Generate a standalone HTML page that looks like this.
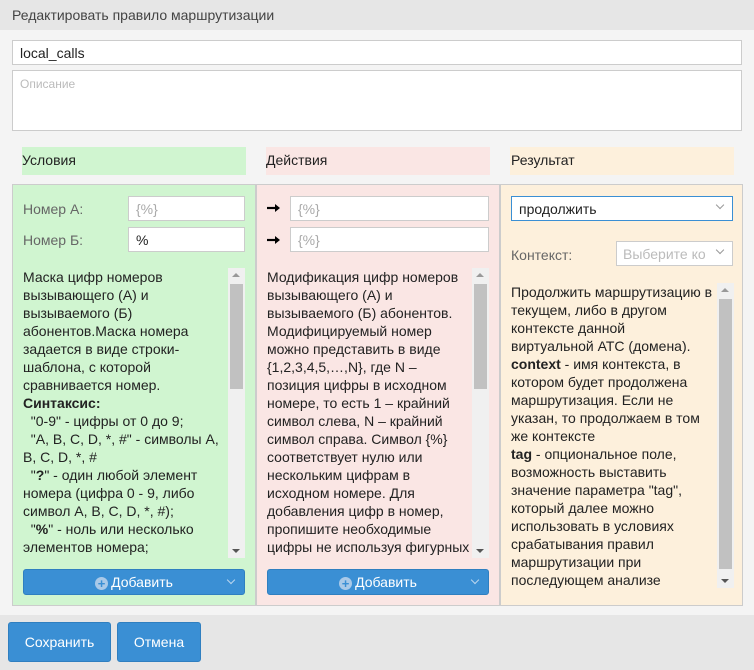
<!DOCTYPE html>
<html><head><meta charset="utf-8"><style>
*{box-sizing:border-box;margin:0;padding:0}
body{width:754px;height:670px;background:#f4f4f4;font-family:"Liberation Sans",Arial,sans-serif;font-size:14px;color:#222;position:relative;overflow:hidden}
.a{position:absolute}
.hdr{left:0;top:0;width:754px;height:30px;background:#e6e6e6;color:#444;padding:7px 12px;font-size:14px}
.inp{background:#fff;border:1px solid #ccc}
.ph{color:#aaa}
.ch{height:28px;padding:5px 0 0 0;font-size:14px;color:#222}
.lbl{color:#666}
.txt{line-height:18px;font-size:14px;color:#222;overflow:hidden}
.sb{background:#f0f0f0;width:17px}
.sb .th{position:absolute;left:2px;top:16px;width:13px;height:105px;background:#c1c1c1}
.sb .up,.sb .dn{position:absolute;left:4px;width:0;height:0;border-left:4px solid transparent;border-right:4px solid transparent}
.sb .up{top:5px;border-bottom:4px solid #999}
.sb .dn{bottom:5px;border-top:4px solid #555}
.btn{background:#3a8fd4;border:1px solid #2f7fc0;border-radius:3px;color:#fff;text-align:center}
.chev{position:absolute;width:6px;height:6px;border-right:1px solid #999;border-bottom:1px solid #999;transform:rotate(45deg)}
.ic{display:inline-block;width:13px;height:13px;border-radius:7px;background:#a9c9e8;color:#3a8fd4;font-size:13px;line-height:13px;font-weight:bold;vertical-align:-1px;margin-right:3px}
</style></head><body>
<div class="a hdr">Редактировать правило маршрутизации</div>
<div class="a inp" style="left:12px;top:40px;width:730px;height:25px;padding:4px 7px;font-size:14px">local_calls</div>
<div class="a inp ph" style="left:12px;top:70px;width:730px;height:61px;padding:6px 7px;font-size:12px;color:#bbb">Описание</div>

<div class="a ch" style="left:22px;top:147px;width:224px;background:#d0f5d0">Условия</div>
<div class="a ch" style="left:266px;top:147px;width:224px;background:#fae6e4">Действия</div>
<div class="a ch" style="left:510px;top:147px;width:224px;background:#fdf0dc;padding-left:1px">Результат</div>

<div class="a" style="left:12px;top:184px;width:731px;height:422px;border:1px solid #ccc;background:#ccc"></div>
<div class="a" style="left:13px;top:185px;width:242px;height:420px;background:#d0f5d0"></div>
<div class="a" style="left:257px;top:185px;width:242px;height:420px;background:#fae6e4"></div>
<div class="a" style="left:501px;top:185px;width:241px;height:420px;background:#fdf0dc"></div>

<!-- col1 -->
<div class="a lbl" style="left:23px;top:201px">Номер А:</div>
<div class="a inp ph" style="left:128px;top:196px;width:117px;height:25px;padding:4px 7px">{%}</div>
<div class="a lbl" style="left:23px;top:232px">Номер Б:</div>
<div class="a inp" style="left:128px;top:227px;width:117px;height:25px;padding:4px 7px">%</div>
<div class="a txt" style="left:23px;top:268px;width:205px;height:290px">Маска цифр номеров вызывающего (А) и вызываемого (Б) абонентов.Маска номера задается в виде строки-шаблона, с которой сравнивается номер.<br><b>Синтаксис:</b><br>&nbsp;&nbsp;"0-9" - цифры от 0 до 9;<br>&nbsp;&nbsp;"A, B, C, D, *, #" - символы A, B, C, D, *, #<br>&nbsp;&nbsp;"<b>?</b>" - один любой элемент номера (цифра 0 - 9, либо символ A, B, C, D, *, #);<br>&nbsp;&nbsp;"<b>%</b>" - ноль или несколько элементов номера;</div>
<div class="a sb" style="left:228px;top:268px;height:290px"><div class="up"></div><div class="th"></div><div class="dn"></div></div>
<div class="a btn" style="left:23px;top:569px;width:222px;height:26px;padding-top:4px"><span class="ic">+</span>Добавить<div class="chev" style="right:10px;top:7px;border-color:#bcd6ee"></div></div>

<!-- col2 -->
<svg class="a" style="left:267px;top:204px" width="14" height="8"><path d="M0 4H9" stroke="#000" stroke-width="2.2"/><path d="M8 0L13 4L8 8Z" fill="#000"/></svg>
<div class="a inp ph" style="left:290px;top:196px;width:199px;height:25px;padding:4px 7px">{%}</div>
<svg class="a" style="left:267px;top:236px" width="14" height="8"><path d="M0 4H9" stroke="#000" stroke-width="2.2"/><path d="M8 0L13 4L8 8Z" fill="#000"/></svg>
<div class="a inp ph" style="left:290px;top:227px;width:199px;height:25px;padding:4px 7px">{%}</div>
<div class="a txt" style="left:267px;top:268px;width:206px;height:290px">Модификация цифр номеров вызывающего (А) и вызываемого (Б) абонентов. Модифицируемый номер можно представить в виде {1,2,3,4,5,…,N}, где N – позиция цифры в исходном номере, то есть 1 – крайний символ слева, N – крайний символ справа. Символ {%} соответствует нулю или нескольким цифрам в исходном номере. Для добавления цифр в номер, пропишите необходимые цифры не используя фигурных</div>
<div class="a sb" style="left:472px;top:268px;height:290px"><div class="up"></div><div class="th"></div><div class="dn"></div></div>
<div class="a btn" style="left:267px;top:569px;width:222px;height:26px;padding-top:4px"><span class="ic">+</span>Добавить<div class="chev" style="right:10px;top:7px;border-color:#bcd6ee"></div></div>

<!-- col3 -->
<div class="a inp" style="left:511px;top:196px;width:222px;height:25px;padding:4px 7px;border-color:#3a8fd4">продолжить<div class="chev" style="right:9px;top:5px"></div></div>
<div class="a lbl" style="left:511px;top:247px">Контекст:</div>
<div class="a inp ph" style="left:616px;top:241px;width:117px;height:25px;padding:4px 6px;overflow:hidden;white-space:nowrap;color:#bbb">Выберите ко<div class="chev" style="right:9px;top:5px;background:#fff;box-shadow:0 0 0 3px #fff"></div></div>
<div class="a txt" style="left:511px;top:283px;width:206px;height:305px;white-space:nowrap">Продолжить маршрутизацию в<br>текущем, либо в другом<br>контексте данной<br>виртуальной АТС (домена).<br><b>context</b> - имя контекста, в<br>котором будет продолжена<br>маршрутизация. Если не<br>указан, то продолжаем в том<br>же контексте<br><b>tag</b> - опциональное поле,<br>возможность выставить<br>значение параметра "tag",<br>который далее можно<br>использовать в условиях<br>срабатывания правил<br>маршрутизации при<br>последующем анализе</div>
<div class="a sb" style="left:717px;top:283px;height:305px"><div class="up"></div><div class="th" style="height:270px"></div><div class="dn"></div></div>

<div class="a" style="left:0;top:615px;width:754px;height:55px;background:#e6e6e6"></div>
<div class="a btn" style="left:8px;top:622px;width:103px;height:40px;padding-top:11px;font-size:14px">Сохранить</div>
<div class="a btn" style="left:117px;top:622px;width:84px;height:40px;padding-top:11px;font-size:14px">Отмена</div>
</body></html>
